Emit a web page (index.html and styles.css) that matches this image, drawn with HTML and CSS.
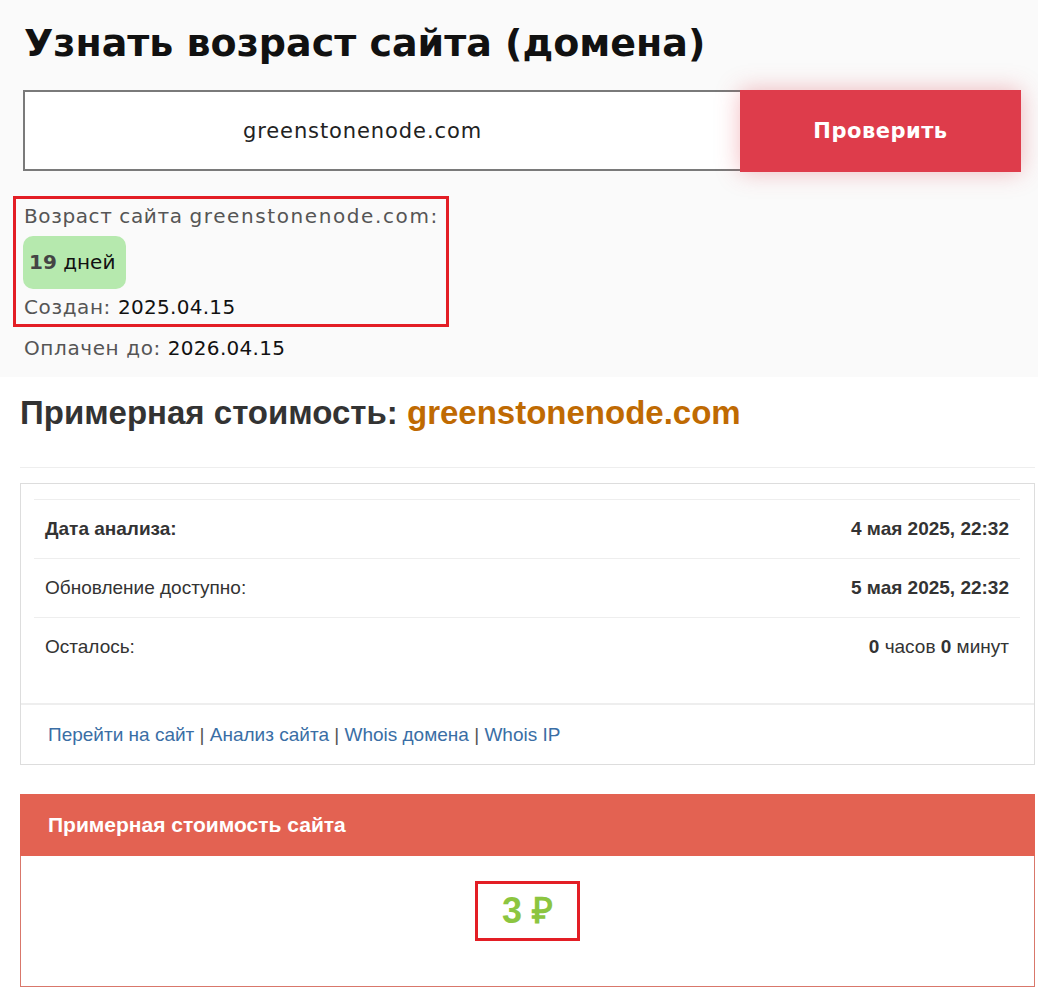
FILE: index.html
```html
<!DOCTYPE html>
<html lang="ru">
<head>
  <meta charset="UTF-8" />
  <meta name="viewport" content="width=device-width, initial-scale=1.0" />
  <title>Узнать возраст сайта</title>
  <link rel="stylesheet" href="styles.css">
</head>
<body>
  <div class="age-block">
    <h1>Узнать возраст сайта (домена)</h1>
    <form class="check-form" onsubmit="return false">
      <input class="domain-input" type="text" value="greenstonenode.com" />
      <button class="check-btn" type="submit">Проверить</button>
    </form>
    <div class="age-result">
      <div class="age-line">Возраст сайта <span class="site">greenstonenode.com:</span></div>
      <div class="age-badge"><b>19</b> дней</div>
      <div class="age-line">Создан: <span class="val">2025.04.15</span></div>
    </div>
    <div class="age-line paid">Оплачен до: <span class="val">2026.04.15</span></div>
  </div>

  <div class="cost-block">
    <h2>Примерная стоимость: <span class="domain">greenstonenode.com</span></h2>
    <hr />

    <div class="panel">
      <div class="panel-body">
        <table class="info-table">
          <tr>
            <td><b>Дата анализа:</b></td>
            <td class="right"><b>4 мая 2025, 22:32</b></td>
          </tr>
          <tr>
            <td>Обновление доступно:</td>
            <td class="right"><b>5 мая 2025, 22:32</b></td>
          </tr>
          <tr>
            <td>Осталось:</td>
            <td class="right"><b>0</b> часов <b>0</b> минут</td>
          </tr>
        </table>
      </div>
      <div class="panel-footer">
        <a href="#">Перейти на сайт</a> | <a href="#">Анализ сайта</a> | <a href="#">Whois домена</a> | <a href="#">Whois IP</a>
      </div>
    </div>

    <div class="panel price-panel">
      <div class="panel-heading">Примерная стоимость сайта</div>
      <div class="price-body">
        <span class="price">3 ₽</span>
      </div>
    </div>
  </div>
</body>
</html>
```

FILE: styles.css
```css
body {
  margin: 0;
  background: #fff;
  font-family: "DejaVu Sans", sans-serif;
  color: #222;
}
.age-block {
  background: #fafafa;
  padding: 14px 17px 12px 23px;
}
h1 {
  margin: 0 0 18px 1px;
  font-size: 38px;
  font-weight: 700;
  line-height: 58px;
  color: #111;
}
.check-form {
  display: flex;
  margin-bottom: 24px;
}
.domain-input {
  flex: 1;
  height: 81px;
  box-sizing: border-box;
  padding: 0 40px 0 0;
  border: 2px solid #7a7a7a;
  border-right: none;
  background: #fff;
  text-align: center;
  font-family: "DejaVu Sans", sans-serif;
  font-size: 21px;
  letter-spacing: 0.9px;
  color: #222;
  outline: none;
}
.check-btn {
  width: 281px;
  height: 82px;
  border: none;
  background: #de3c4b;
  color: #fff;
  font-family: "DejaVu Sans", sans-serif;
  font-size: 21px;
  font-weight: 700;
  letter-spacing: 0.5px;
  box-shadow: 0 0 22px rgba(222, 60, 75, 0.35);
  cursor: pointer;
}
.age-result {
  display: inline-block;
  margin-left: -10px;
  padding: 0 7px 0 8px;
  border: 3px solid #e31e25;
}
.age-line {
  font-size: 20px;
  line-height: 34px;
  letter-spacing: 0.6px;
  color: #555;
}
.age-line .site {
  letter-spacing: 1.6px;
}
.age-line .val {
  color: #111;
  letter-spacing: 0.3px;
}
.age-badge {
  display: inline-block;
  margin: 3px 0 1px -1px;
  padding: 0 11px 0 6px;
  height: 53px;
  line-height: 53px;
  border-radius: 10px;
  background: #b6e9ae;
  font-size: 20px;
  color: #111;
}
.age-badge b {
  color: #444;
}
.paid {
  margin-top: 4px;
  padding-left: 1px;
}

.cost-block {
  padding: 0 3px 20px 20px;
  font-family: "Liberation Sans", Arial, sans-serif;
  color: #333;
}
h2 {
  margin: 0;
  padding: 16px 0 0;
  font-size: 33px;
  line-height: 40px;
  color: #333;
}
h2 .domain {
  color: #bf6a02;
}
hr {
  margin: 34px 0 15px;
  border: none;
  border-top: 1px solid #eee;
}
.panel {
  border: 1px solid #ddd;
  background: #fff;
}
.panel-body {
  padding: 15px 14px 27px 13px;
}
.info-table {
  width: 100%;
  border-collapse: collapse;
  font-size: 19px;
}
.info-table td {
  border-top: 1px solid #eee;
  height: 58px;
  padding: 0 11px;
}
.info-table .right {
  text-align: right;
  padding-right: 11px;
}
.panel-footer {
  border-top: 2px solid #eee;
  padding: 0 27px;
  height: 59px;
  line-height: 59px;
  font-size: 19px;
  color: #555;
}
.panel-footer a {
  color: #3a6ea5;
  text-decoration: none;
}
.price-panel {
  margin-top: 29px;
  border-color: #d9776b;
}
.panel-heading {
  background: #e36252;
  color: #fff;
  font-weight: 700;
  font-size: 21px;
  height: 62px;
  line-height: 62px;
  padding: 0 28px;
  margin: -1px -1px 0;
}
.price-body {
  height: 130px;
  box-sizing: border-box;
  padding-top: 25px;
  text-align: center;
}
.price {
  display: inline-block;
  padding: 9px 24px;
  border: 3px solid #e31e25;
  color: #8cc540;
  font-size: 36px;
  font-weight: 700;
  line-height: 36px;
}
```
